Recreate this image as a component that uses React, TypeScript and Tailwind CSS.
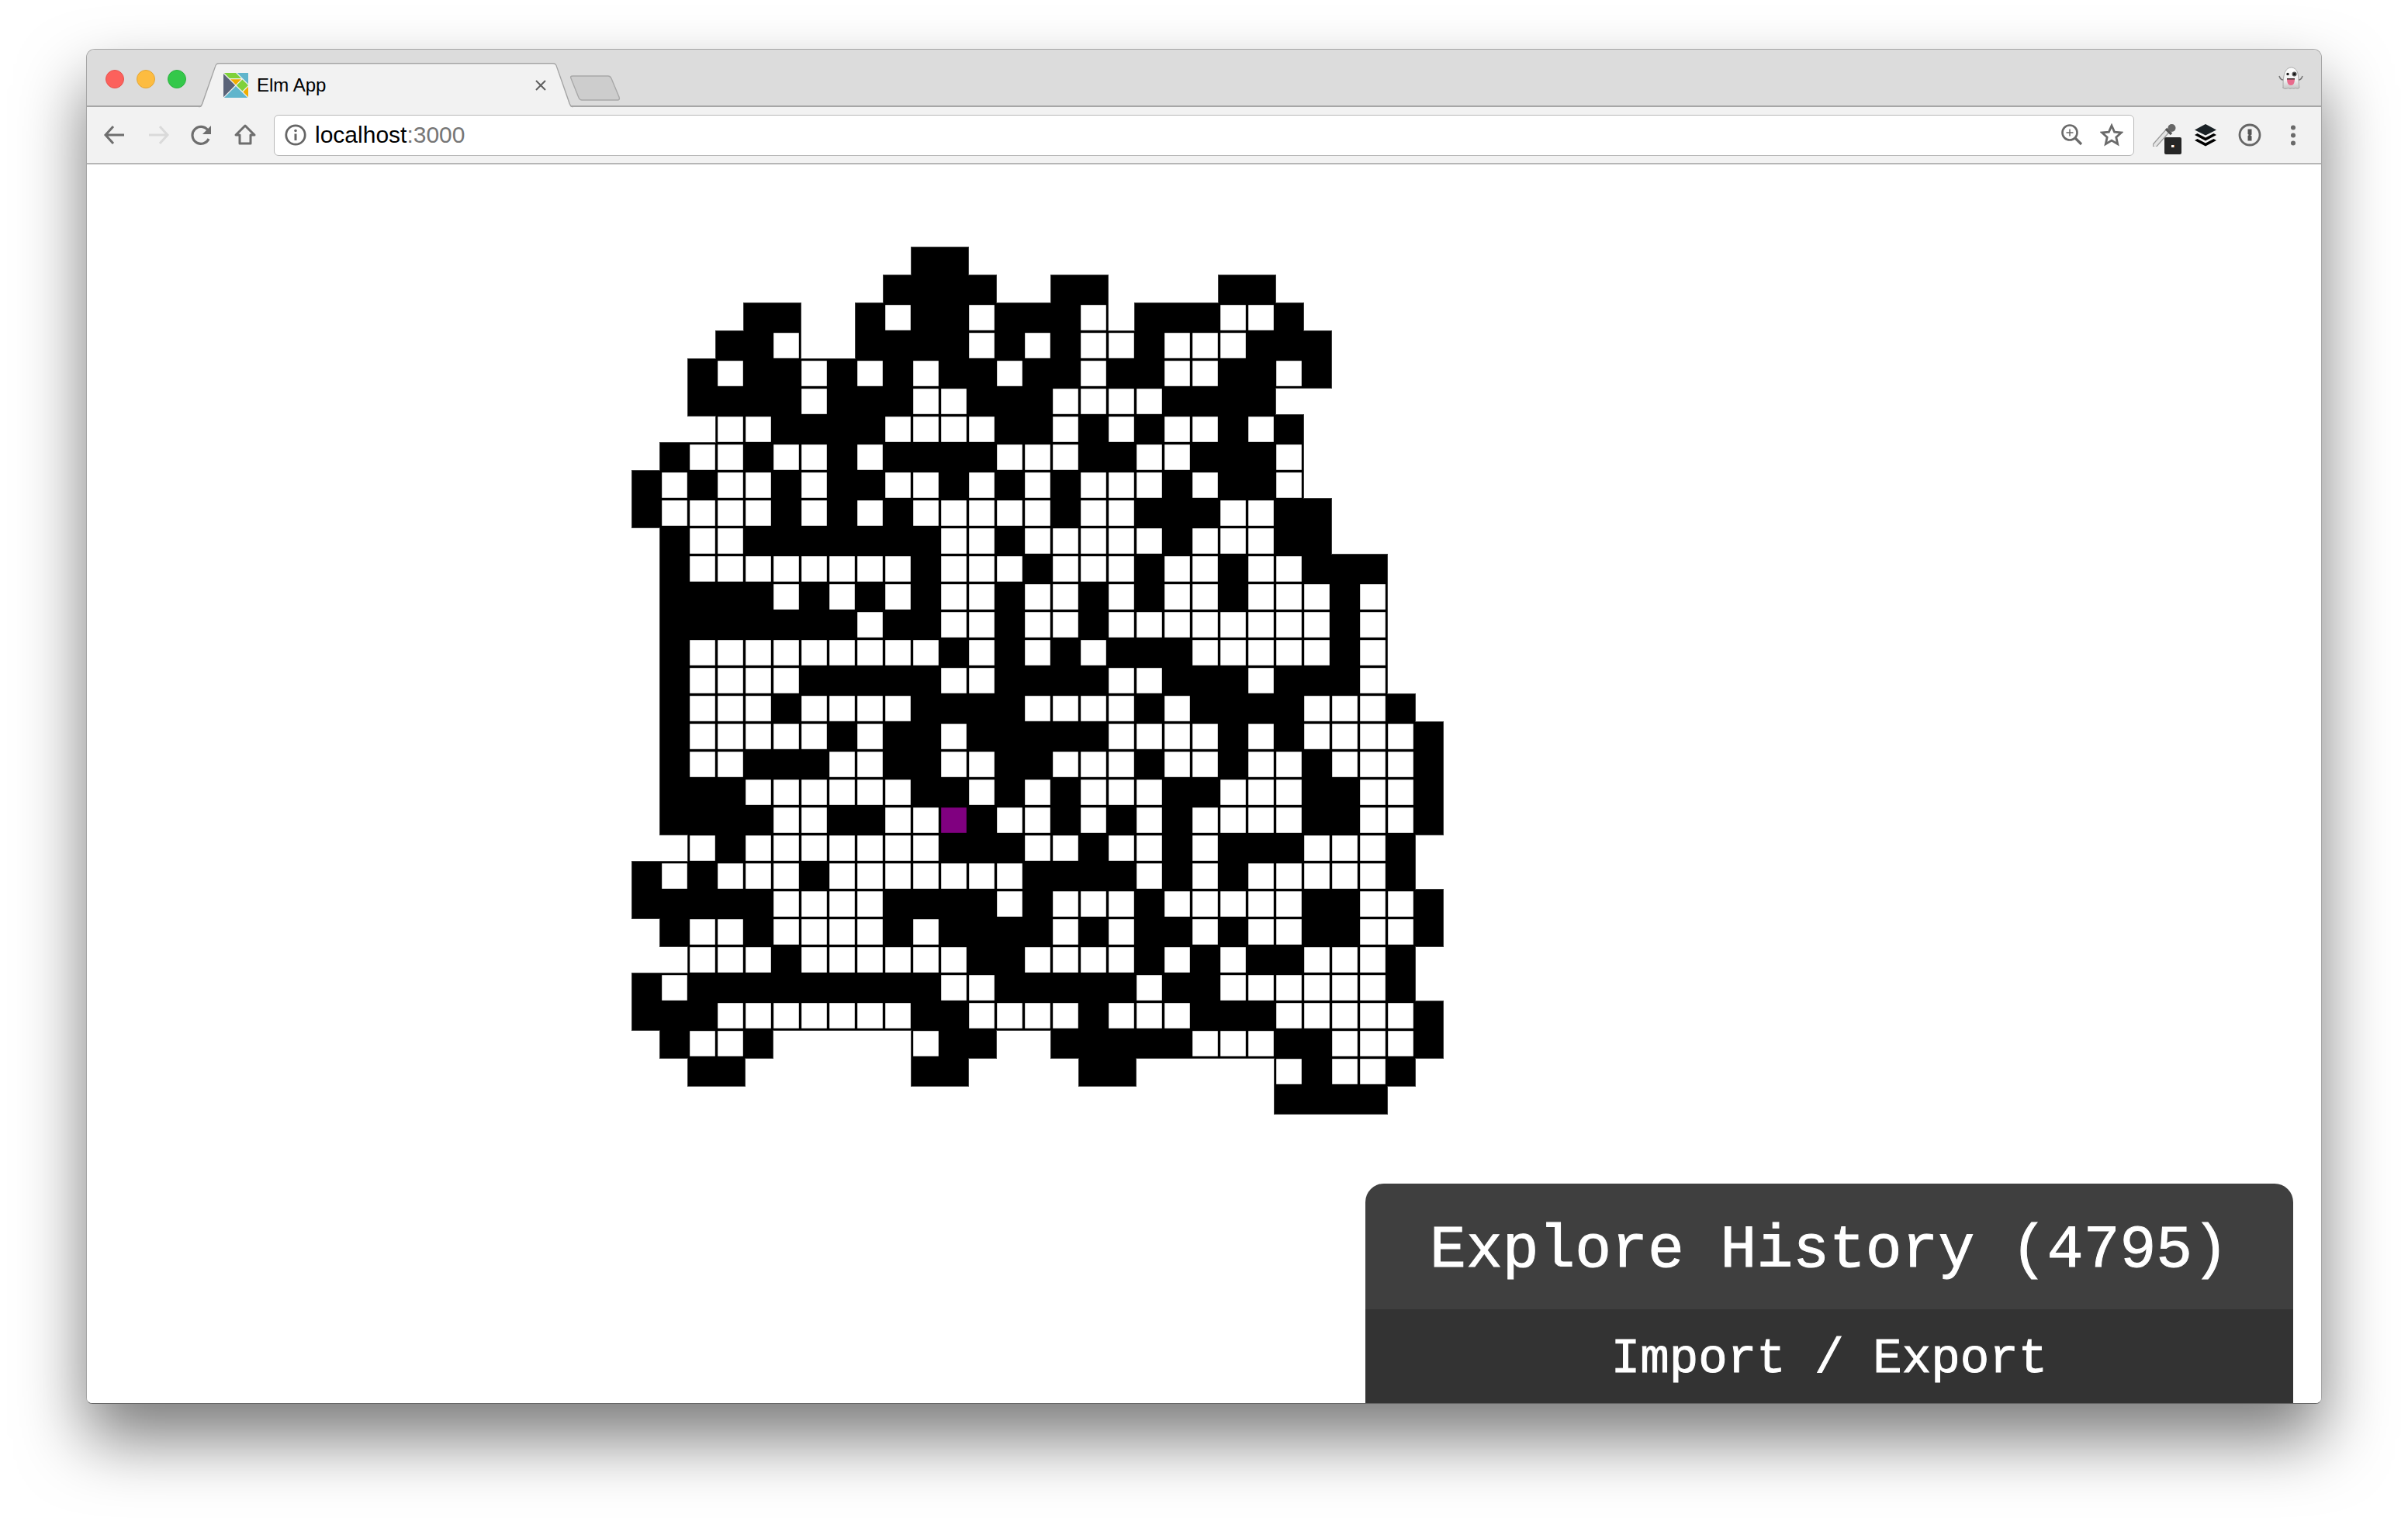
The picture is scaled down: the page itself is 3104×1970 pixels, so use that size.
import React from "react";

// ' ' = no cell, '#' = wall, '.' = open, 'P' = player
const BOARD = [
  "          ##",
  "         ####  ##    ##",
  "    ##  #.##.###. ###..#",
  "   ##.  ####.#.#..#...###",
  "  #.##.#.#.##.##.##..##.#",
  "  ####.###..###....####",
  "   ..####....##.#.#..#.#",
  " #..#..#.####...##..###.",
  "#.#..#.##..#.#.#...#.##.",
  "#....#.#.#.....#..###..##",
  " #..#######..#.....#...##",
  " #........#...#...#..#..###",
  " ####.#.#.#..#..#.#..#...#.",
  " #######.##..#..#........#.",
  " #.........#.#.#.###.....#.",
  " #....#####..####..###.###.",
  " #...#....####....#.####...#",
  " #.....#.##.#####....#.#....#",
  " #..###..##..##...#..#..#...#",
  " ###......##.#.#...##...##..#",
  " ####..##..P#..#.#.#....##..#",
  "  .#.......###..#..#.###...#",
  "#.#...#.......####.#.#.....#",
  "#####....####.#...#.....##..#",
  " #..#....#.####.#.##.#..##..#",
  "  ...#......##....#.#.##...#",
  "#.#########..#####.##......#",
  "###.......##....#...###.....#",
  " #..#     .##  #####...##...#",
  "  ##      ##    ##     .#..#",
  "                       ####",
];

const CELL = 36;

function Board() {
  const cells: { x: number; y: number; c: string }[] = [];
  BOARD.forEach((row, r) => {
    row.split("").forEach((c, i) => {
      if (c !== " ") cells.push({ x: i * CELL, y: r * CELL, c });
    });
  });

  return (
    <svg width={1047} height={1119} className="block shrink-0">
      {cells.map((k, i) => (
        <rect key={"o" + i} x={k.x} y={k.y} width={39} height={39} fill="#3c3c3c" shapeRendering="crispEdges" />
      ))}
      {cells.map((k, i) => (
        <rect key={"b" + i} x={k.x + 1} y={k.y + 1} width={37} height={37} fill="#000" shapeRendering="crispEdges" />
      ))}
      {/* fractional on purpose, the soft edge is what the cells look like */}
      {cells
        .filter((k) => k.c !== "#")
        .map((k, i) => (
          <rect key={"w" + i} x={k.x + 3.2} y={k.y + 3.2} width={32.6} height={32.6} fill={k.c === "P" ? "#800080" : "#fff"} />
        ))}
    </svg>
  );
}

function ElmLogo() {
  return (
    <svg width={32} height={32} viewBox="0 0 323.141 322.95" className="shrink-0">
      <polygon fill="#F0AD00" points="161.649,152.782 231.514,82.916 91.783,82.916" />
      <polygon fill="#7FD13B" points="8.867,0 79.241,70.375 232.213,70.375 161.838,0" />
      <rect
        fill="#7FD13B"
        x="192.99"
        y="107.392"
        width="107.676"
        height="108.167"
        transform="matrix(0.7071 0.7071 -0.7071 0.7071 186.4727 -127.2386)"
      />
      <polygon fill="#60B5CC" points="323.298,143.724 323.298,0 179.573,0" />
      <polygon fill="#5A6378" points="152.781,161.649 0,8.868 0,314.432" />
      <polygon fill="#F0AD00" points="255.522,246.655 323.298,314.432 323.298,178.879" />
      <polygon fill="#60B5CC" points="161.649,170.517 8.869,323.298 314.43,323.298" />
    </svg>
  );
}

function Ghost() {
  return (
    <svg width={32} height={30} viewBox="0 0 32 30" className="shrink-0">
      <defs>
        <linearGradient id="ghostBody" x1="0" y1="0" x2="0" y2="1">
          <stop offset="0" stopColor="#ffffff" />
          <stop offset="0.6" stopColor="#f0f0f0" />
          <stop offset="1" stopColor="#c4c4c4" />
        </linearGradient>
      </defs>
      <path d="M1 12c1 3 3 5 5 5M31 12c-1 3-3 5-5 5" stroke="#777" strokeWidth={1.6} fill="none" />
      <path
        d="M6 27c0-6 0-10 1-15C8 5 12 1 16.500 1S25 5 25.500 12c.5 5 .5 10 1.500 15-1.500 2-3.500 1-5 .5-1.500 1-3 1-4.500.3-2 .8-3.500.7-5-.2-2 1-5 1.500-7-.6z"
        fill="url(#ghostBody)"
        stroke="#9a9a9a"
        strokeWidth={0.8}
      />
      <circle cx={12} cy={9.500} r={1.700} fill="#222" />
      <circle cx={20.500} cy={9.500} r={3} fill="#555" />
      <circle cx={20.500} cy={9.500} r={1.500} fill="#111" />
      <path d="M11 15h10c0 6-1.500 9-5 9s-5-3-5-9z" fill="#e86a8c" />
      <path d="M11 15h10v1.500H11z" fill="#3a2a2a" />
    </svg>
  );
}

function NavIcon({ children }: { children: React.ReactNode }) {
  return (
    <svg width={30} height={30} viewBox="0 0 30 30" fill="none" className="shrink-0 block">
      {children}
    </svg>
  );
}

export default function App() {
  return (
    <div className="w-[3104px] h-[1970px] bg-white pt-[63px] pl-[111px] overflow-hidden [font-family:'Liberation_Sans',Arial,sans-serif]">
      <div className="w-[2882px] h-[1747px] flex flex-col overflow-hidden rounded-t-[11px] rounded-b-[8px] bg-white border border-[#a6a6a6] border-b-[#666666] shadow-[0_45px_85px_rgba(0,0,0,0.52)]">
        {/* Tab strip */}
        <div className="h-[74px] shrink-0 flex bg-[#dcdcdc] border-b-[2px] border-[#a6a6a6]">
          <div className="ml-[24px] mt-[26px] flex gap-[16px] self-start">
            <span className="w-[24px] h-[24px] rounded-full bg-[#fc615c] border border-[#e5544f]" />
            <span className="w-[24px] h-[24px] rounded-full bg-[#fdbc40] border border-[#e3a636]" />
            <span className="w-[24px] h-[24px] rounded-full bg-[#34c84a] border border-[#2eb141]" />
          </div>

          <div className="relative ml-[16px] w-[483px] h-[58px] mt-[17px] shrink-0 flex items-start pl-[32px] pt-[13px]">
            <svg width={483} height={58} className="absolute inset-0">
              <path d="M0 57.500 H1 C3 57.500 4 56 5 53 L20 6 C21 2 23 .8 27 .8 H456 C460 .8 462 2 463 6 L478 53 C479 56 480 57.500 482 57.500 H483 V58 H0 Z" fill="#f2f2f2" />
              <path d="M0 56.500 H1 C3 56.500 4 55 5 52 L21 6 C22 2 23 .8 27 .8 H456 C460 .8 461 2 462 6 L478 52 C479 55 480 56.500 482 56.500 H483" fill="none" stroke="#a4a4a4" strokeWidth={1.400} />
            </svg>
            <div className="relative">
              <ElmLogo />
            </div>
            <span className="relative ml-[11px] text-[24px] leading-[32px] text-black">Elm App</span>
            <svg width={16} height={16} viewBox="0 0 16 16" className="absolute left-[433px] top-[21px]">
              <path d="M2 2L14 14M14 2L2 14" stroke="#5f5f5f" strokeWidth={2} />
            </svg>
          </div>

          <svg width={66} height={33} viewBox="0 0 66 33" className="ml-[-5px] mt-[33px] shrink-0 self-start">
            <path d="M4 1 H50 C52 1 53 2 54 4 L64 28 C65 31 64 32 62 32 H16 C14 32 13 31 12 29 L2 4 C1 2 2 1 4 1 Z" fill="#cdcdcd" stroke="#a8a8a8" strokeWidth={1.400} />
          </svg>

          <div className="ml-auto mr-[23px] mt-[22px] self-start">
            <Ghost />
          </div>
        </div>

        {/* Toolbar */}
        <div className="h-[74px] shrink-0 flex items-center bg-[#f2f2f2] border-b-[2px] border-[#b6b6b6] pl-[21px]">
          <div className="flex items-center gap-[26px]">
            <NavIcon>
              <path d="M27 15H3M13 4L3 15l10 11" stroke="#6e6e6e" strokeWidth={3} />
            </NavIcon>
            <NavIcon>
              <path d="M3 15h24M17 4l10 11-10 11" stroke="#dadada" strokeWidth={3} />
            </NavIcon>
            <NavIcon>
              <path d="M24 20a11 11 0 1 1-1-11" stroke="#6e6e6e" strokeWidth={3.200} />
              <path d="M27 3v11H16z" fill="#6e6e6e" />
            </NavIcon>
            <NavIcon>
              <path d="M15 3L3 15h5v11h14V15h5z" stroke="#6e6e6e" strokeWidth={3} strokeLinejoin="round" />
            </NavIcon>
          </div>

          <div className="ml-[22px] w-[2398px] h-[53px] shrink-0 flex items-center bg-white border border-[#b8b8b8] rounded-[6px] pl-[13px]">
            <svg width={28} height={28} viewBox="0 0 28 28" fill="none" className="shrink-0">
              <circle cx={14} cy={14} r={12.200} stroke="#666" strokeWidth={2.800} />
              <path d="M14 12.500V21" stroke="#666" strokeWidth={3} />
              <circle cx={14} cy={8.500} r={1.800} fill="#666" />
            </svg>
            <span className="ml-[11px] text-[30px] leading-none text-black">
              localhost<span className="text-[#767676]">:3000</span>
            </span>
            <svg width={30} height={30} viewBox="0 0 30 30" fill="none" className="ml-auto mr-[21px] shrink-0">
              <circle cx={12} cy={12} r={9.500} stroke="#6a6a6a" strokeWidth={2.600} />
              <path d="M19 19l8 8" stroke="#6a6a6a" strokeWidth={3.200} />
              <path d="M12 7.500v9M7.500 12h9" stroke="#6a6a6a" strokeWidth={1.500} />
            </svg>
            <svg width={30} height={30} viewBox="0 0 30 30" fill="none" className="mr-[13px] shrink-0">
              <path d="M15 3l3.600 8.100 8.800.900-6.600 5.900 1.900 8.700-7.700-4.500-7.700 4.500 1.900-8.700L2.600 12l8.800-.9z" stroke="#6a6a6a" strokeWidth={2.800} strokeLinejoin="miter" />
            </svg>
          </div>

          <div className="relative ml-[24px] w-[30px] h-[30px] shrink-0">
            <svg width={32} height={30} viewBox="0 0 32 30" fill="none">
              <path d="M3 28L18 11" stroke="#9a9a9a" strokeWidth={6.500} strokeLinecap="round" />
              <path d="M3 28L18 11" stroke="#e4e4e4" strokeWidth={4} strokeLinecap="round" />
              <path d="M17 7l7 7" stroke="#555" strokeWidth={3.500} />
              <circle cx={24.500} cy={6} r={5} fill="#666" />
            </svg>
            <div className="absolute left-[15px] top-[18px] w-[22px] h-[22px] rounded-[2px] bg-[#262626] flex items-center justify-center">
              <span className="w-[3px] h-[3px] bg-white" />
              <span className="w-[1px] h-[3px] bg-[#e8833a]" />
            </div>
          </div>

          <svg width={30} height={30} viewBox="0 0 30 30" className="ml-[23px] shrink-0">
            <path d="M15 1L29 8.500 15 15.500 1 8.500z" fill="#1b2226" />
            <path d="M4.500 13L1 15l14 7.500L29 15l-3.500-2L15 18.500z" fill="#000" />
            <path d="M4.500 20L1 22l14 7.500L29 22l-3.500-2L15 25.500z" fill="#000" />
          </svg>

          <svg width={30} height={30} viewBox="0 0 30 30" fill="none" className="ml-[27px] shrink-0">
            <circle cx={15} cy={15} r={13} stroke="#666" strokeWidth={2.800} />
            <path d="M12.500 7.500h5v7l-1.500 1 1.500 1v6h-5v-6.500l1.500-1-1.500-1z" fill="#555" />
          </svg>

          <svg width={30} height={30} viewBox="0 0 30 30" className="ml-[26px] shrink-0">
            <circle cx={15} cy={5.500} r={3} fill="#6a6a6a" />
            <circle cx={15} cy={15.500} r={3} fill="#6a6a6a" />
            <circle cx={15} cy={25.500} r={3} fill="#6a6a6a" />
          </svg>
        </div>

        {/* Page */}
        <div className="flex-1 min-h-0 flex flex-col bg-white">
          <div className="ml-[702px] mt-[106px]">
            <Board />
          </div>

          <div className="mt-auto mr-[36px] self-end w-[1196px] overflow-hidden rounded-t-[24px] text-white [font-family:'Liberation_Mono','Courier_New',monospace] [-webkit-text-stroke:1px_white]">
            <div className="h-[162px] pt-[10px] flex items-center justify-center bg-[#3f3f3f] text-[78px] leading-none">
              Explore History (4795)
            </div>
            <div className="h-[121px] pt-[10px] flex items-center justify-center bg-[#333333] text-[62.5px] leading-none">
              Import / Export
            </div>
          </div>
        </div>
      </div>
    </div>
  );
}
